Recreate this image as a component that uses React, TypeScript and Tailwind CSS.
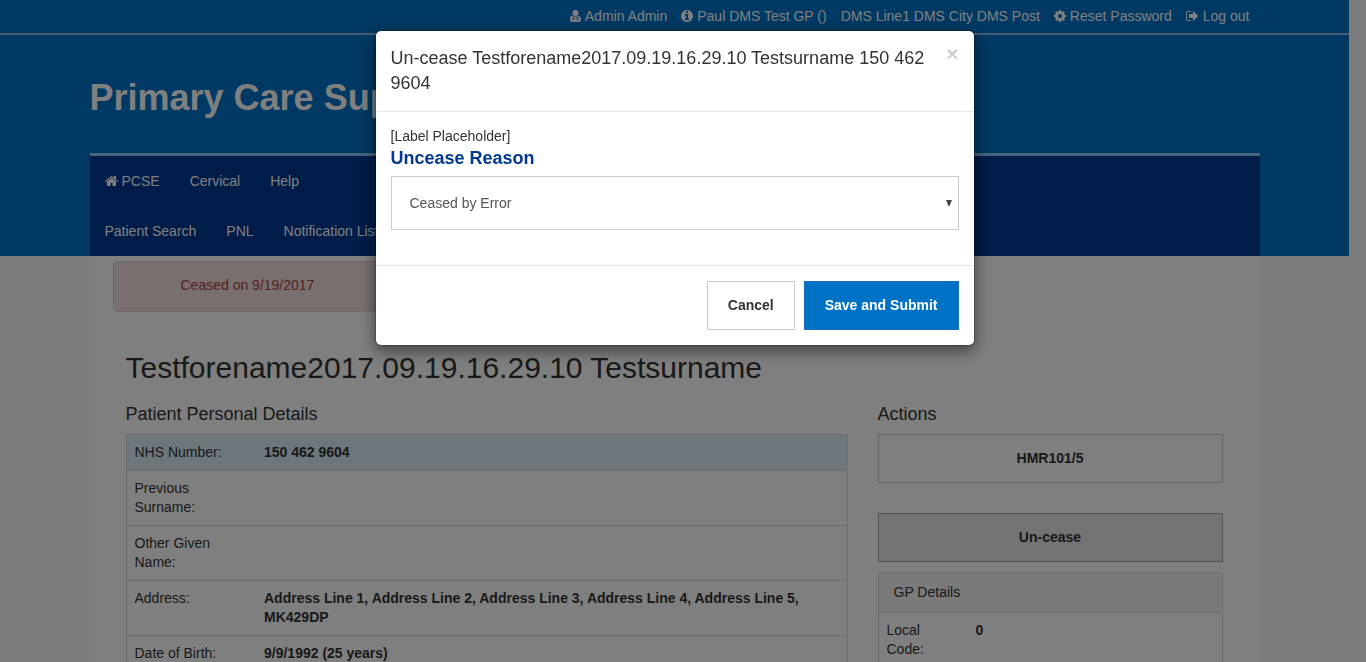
import React from "react";

const ICONS = {
  info: {
    box: "128 0 1536 1792",
    w: 12,
    d: "M1152 1376v-160q0-14-9-23t-23-9h-96v-512q0-14-9-23t-23-9h-320q-14 0-23 9t-9 23v160q0 14 9 23t23 9h96v320h-96q-14 0-23 9t-9 23v160q0 14 9 23t23 9h448q14 0 23-9t9-23zm-128-896v-160q0-14-9-23t-23-9h-192q-14 0-23 9t-9 23v160q0 14 9 23t23 9h192q14 0 23-9t9-23zm640 416q0 209-103 385.5t-279.5 279.5-385.5 103-385.5-103-279.5-279.5-103-385.5 103-385.5 279.5-279.5 385.5-103 385.5 103 279.5 279.5 103 385.5z",
  },
  cog: {
    box: "128 0 1536 1792",
    w: 12,
    d: "M1152 896q0-106-75-181t-181-75-181 75-75 181 75 181 181 75 181-75 75-181zm512-109v222q0 12-8 23t-20 13l-185 28q-19 54-39 91 35 50 107 138 10 12 10 25t-9 23q-27 37-99 108t-94 71q-12 0-26-9l-138-108q-44 23-91 38-16 136-29 186-7 28-36 28h-222q-14 0-24.5-8.5t-11.5-21.5l-28-184q-49-16-90-37l-141 107q-10 9-25 9-14 0-25-11-126-114-165-168-7-10-7-23 0-12 8-23 15-21 51-66.5t54-70.5q-27-50-41-99l-183-27q-13-2-21-12.5t-8-23.5v-222q0-12 8-23t19-13l186-28q14-46 39-92-40-57-107-138-10-12-10-24 0-10 9-23 26-36 98.5-107.5t94.5-71.5q13 0 26 10l138 107q44-23 91-38 16-136 29-186 7-28 36-28h222q14 0 24.5 8.5t11.5 21.5l28 184q49 16 90 37l142-107q9-9 24-9 13 0 25 10 129 119 165 170 7 8 7 22 0 12-8 23-15 21-51 66.5t-54 70.5q26 50 41 98l183 28q13 2 21 12.5t8 23.5z",
  },
  signOut: {
    box: "0 0 1664 1792",
    w: 13,
    d: "M640 1440q0 4 1 20t.5 26.5-3 23.5-10 19.5-20.5 6.5h-320q-119 0-203.5-84.5t-84.5-203.5v-704q0-119 84.5-203.5t203.5-84.5h320q13 0 22.5 9.5t9.5 22.5q0 4 1 20t.5 26.5-3 23.5-10 19.5-20.5 6.5h-320q-66 0-113 47t-47 113v704q0 66 47 113t113 47h312l11.5 1 11.5 3 8 5.5 7 9 2 13.5zm928-544q0 26-19 45l-544 544q-19 19-45 19t-45-19-19-45v-288h-448q-26 0-45-19t-19-45v-384q0-26 19-45t45-19h448v-288q0-26 19-45t45-19 45 19l544 544q19 19 19 45z",
  },
  home: {
    box: "64 0 1664 1792",
    w: 13,
    d: "M1472 992v480q0 26-19 45t-45 19h-384v-384h-256v384h-384q-26 0-45-19t-19-45v-480q0-1 .5-3t.5-3l575-474 575 474q1 2 1 6zm223-69l-62 74q-8 9-21 11h-3q-13 0-21-7l-692-577-692 577q-12 8-24 7-13-2-21-11l-62-74q-8-10-7-23.5t11-21.5l719-599q32-26 76-26t76 26l244 204v-195q0-14 9-23t23-9h192q14 0 23 9t9 23v408l219 182q10 8 11 21.5t-7 23.5z",
  },
  doctor: {
    box: "0 0 1408 1792",
    w: 11,
    d: "M704 128a384 384 0 0 1 384 384a384 384 0 0 1 -768 0a384 384 0 0 1 384-384zM320 846l64 30v230a128 128 0 1 0 80 0V910q110 80 240 80t240-80v130a190 190 0 0 0-190 190v110a70 70 0 1 0 80 0v-110a120 120 0 0 1 240 0v110a70 70 0 1 0 80 0v-110a190 190 0 0 0-130-180V850q384 60 384 490 0 324-260 324H260Q0 1664 0 1340q0-440 320-494z",
  },
};

function Icon({ name }: { name: keyof typeof ICONS }) {
  const icon = ICONS[name];
  return (
    <svg aria-hidden="true" width={icon.w} height={14} viewBox={icon.box} fill="currentColor" className="shrink-0">
      <path d={icon.d} />
    </svg>
  );
}

const topLinks: { icon?: keyof typeof ICONS; text: string }[] = [
  { icon: "doctor", text: "Admin Admin" },
  { icon: "info", text: "Paul DMS Test GP ()" },
  { text: "DMS Line1 DMS City DMS Post" },
  { icon: "cog", text: "Reset Password" },
  { icon: "signOut", text: "Log out" },
];

const details = [
  ["NHS Number:", "150 462 9604"],
  ["Previous Surname:", ""],
  ["Other Given Name:", ""],
  ["Address:", "Address Line 1, Address Line 2, Address Line 3, Address Line 4, Address Line 5, MK429DP"],
  ["Date of Birth:", "9/9/1992 (25 years)"],
];

function NavLink({ icon, children }: { icon?: keyof typeof ICONS; children: React.ReactNode }) {
  return (
    <a href="#" className="flex h-[50px] items-center gap-1 px-[15px]">
      {icon && <Icon name={icon} />}
      {children}
    </a>
  );
}

function Page() {
  return (
    <div className="pr-[17px]">
      <header className="bg-[#0072c6] text-white">
        <div className="border-b-2 border-[#94b8f0]">
          <div className="mx-auto flex h-[33px] max-w-[1170px] items-center justify-end gap-[14px] pr-[10px] pb-[2px]">
            {topLinks.map((l) => (
              <a key={l.text} href="#" className="flex items-center gap-1 whitespace-nowrap">
                {l.icon && <Icon name={l.icon} />}
                {l.text}
              </a>
            ))}
          </div>
        </div>
        <div className="mx-auto max-w-[1170px]">
          <h1 className="flex h-[118px] items-center pt-2 text-[36px] leading-10 font-bold">Primary Care Support England</h1>
          <nav className="border-t-[3px] border-[#91c8f0] bg-[#003893]">
            <div className="flex">
              <NavLink icon="home">PCSE</NavLink>
              <NavLink>Cervical</NavLink>
              <NavLink>Help</NavLink>
            </div>
            <div className="flex">
              <NavLink>Patient Search</NavLink>
              <NavLink>PNL</NavLink>
              <NavLink>Notification List</NavLink>
            </div>
          </nav>
        </div>
      </header>

      <main className="mx-auto max-w-[1170px] bg-white pt-[5px] pr-[37px] pb-10 pl-[36px]">
        <div className="-ml-[13px] w-1/2 rounded border border-[#ebccd1] bg-[#f2dede] pt-[14px] pb-4 pl-[67px] leading-[19px] text-[#a94442]">
          Ceased on 9/19/2017
        </div>
        <h2 className="mt-10 text-[30px] leading-8">Testforename2017.09.19.16.29.10 Testsurname</h2>
        <div className="mt-5 flex items-start gap-[30px]">
          <section className="min-w-0 flex-1">
            <h3 className="mb-[10px] text-[18px] leading-5">Patient Personal Details</h3>
            <table className="w-full table-fixed border-collapse border border-[#ddd] leading-[19px]">
              <colgroup>
                <col className="w-[130px]" />
                <col />
              </colgroup>
              <tbody>
                {details.map(([label, value], i) => (
                  <tr key={label} className={i === 0 ? "border-b border-[#ddd] bg-[#d9edf7]" : "border-b border-[#ddd]"}>
                    <th scope="row" className="p-2 pr-6 text-left align-top font-normal">{label}</th>
                    <td className="p-2 align-top font-bold">{value}</td>
                  </tr>
                ))}
              </tbody>
            </table>
          </section>
          <aside className="w-[345px]">
            <h3 className="mb-[10px] text-[18px] leading-5">Actions</h3>
            <button type="button" className="block h-[49px] w-full border border-[#ccc] bg-white pb-[2px] font-bold">HMR101/5</button>
            <button type="button" className="mt-[30px] block h-[49px] w-full border border-[#adadad] bg-[#e6e6e6] pb-[2px] font-bold">Un-cease</button>
            <section className="mt-[10px] border border-[#ddd]">
              <h4 className="border-b border-[#ddd] bg-[#f5f5f5] px-[15px] py-[10px] leading-[19px]">GP Details</h4>
              <table className="w-full table-fixed leading-[19px]">
                <tbody>
                  <tr>
                    <th scope="row" className="w-[89px] p-2 pr-6 text-left align-top font-normal">Local Code:</th>
                    <td className="p-2 align-top font-bold">0</td>
                  </tr>
                </tbody>
              </table>
            </section>
          </aside>
        </div>
      </main>
    </div>
  );
}

function UnceaseDialog() {
  return (
    <div className="fixed inset-0 flex items-start justify-center bg-black/50 pt-[30px] pr-[17px]">
      <div
        role="dialog"
        aria-modal="true"
        aria-labelledby="dialog-title"
        className="w-[600px] rounded-md border border-black/20 bg-white bg-clip-padding shadow-[0_5px_15px_rgba(0,0,0,0.5)]"
      >
        <div className="flex items-start gap-5 border-b border-[#e5e5e5] p-[15px]">
          <h4 id="dialog-title" className="flex-1 text-[18px] leading-[25px]">
            Un-cease Testforename2017.09.19.16.29.10 Testsurname 150 462 9604
          </h4>
          <button type="button" aria-label="Close" className="text-[21px] leading-4 font-bold text-black/20">×</button>
        </div>
        <div className="px-[15px] pt-[15px] pb-[35px]">
          <div className="leading-[18px]">[Label Placeholder]</div>
          <label htmlFor="reason" className="block text-[18px] leading-[26px] font-bold text-[#003893]">
            Uncease Reason
          </label>
          <div className="relative mt-[5px]">
            <select
              id="reason"
              className="block h-[54px] w-full appearance-none border border-[#ccc] bg-white px-[18px] text-[#555]"
            >
              <option>Ceased by Error</option>
            </select>
            <svg aria-hidden="true" viewBox="0 0 6 6" className="pointer-events-none absolute top-6 right-[7px] size-[6px]">
              <path d="M0 0h6L3.5 6h-1z" fill="#444" />
            </svg>
          </div>
        </div>
        <div className="flex justify-end gap-[9px] border-t border-[#e5e5e5] p-[15px]">
          <button type="button" className="h-[49px] border border-[#ccc] bg-white px-5 pb-[2px] font-bold">Cancel</button>
          <button type="button" className="h-[49px] border border-[#1c6fb5] bg-[#0072c6] px-5 pb-[2px] font-bold text-white">Save and Submit</button>
        </div>
      </div>
    </div>
  );
}

export default function App() {
  return (
    <div className="h-screen overflow-hidden bg-[#f9f9f9] font-['Liberation_Sans',Arial,sans-serif] text-[14px] leading-5 text-[#333]">
      <Page />
      <UnceaseDialog />
    </div>
  );
}
